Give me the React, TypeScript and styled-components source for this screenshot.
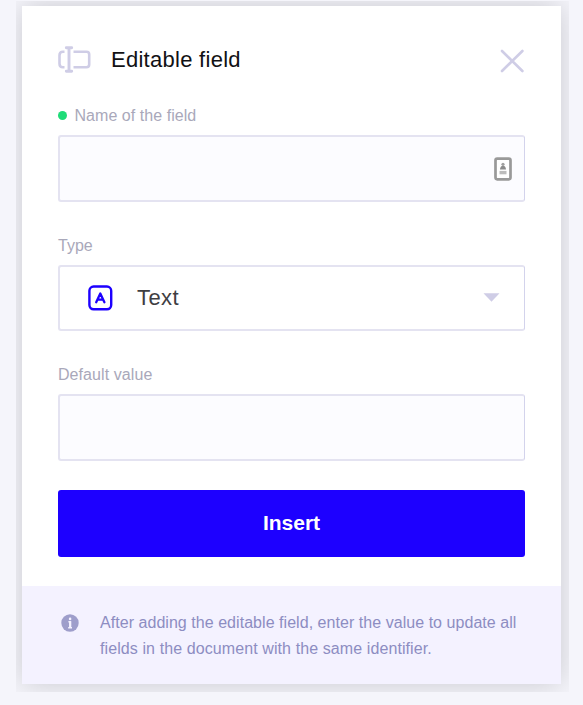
import React from "react";
import styled, { createGlobalStyle } from "styled-components";

const GlobalStyle = createGlobalStyle`
  *, *::before, *::after { box-sizing: border-box; }
  body {
    margin: 0;
    background: #f5f5fb;
    font-family: "Liberation Sans", Arial, sans-serif;
    overflow: hidden;
  }
  button, input { font-family: inherit; }
`;

const Stage = styled.main`
  width: 583px;
  height: 705px;
  padding: 1px 14px 13px 16px;
`;

const Frame = styled.div`
  height: 691px;
  padding: 4.5px 7.6px 8px 6.3px;
  overflow: hidden;
`;

const Dialog = styled.section`
  height: 678.5px;
  display: flex;
  flex-direction: column;
  background: #fff;
  box-shadow: 0 0 28px rgba(0, 0, 0, 0.18);
`;

const Content = styled.div`
  flex: 1;
  padding: 38.5px 36.4px 0 35.7px;
`;

const Header = styled.header`
  display: flex;
  align-items: center;
  height: 32px;
`;

const Title = styled.h1`
  flex: 1;
  margin: 0 0 0 19px;
  font-size: 22px;
  line-height: 32px;
  font-weight: 400;
  letter-spacing: 0.28px;
  color: #111114;
`;

const CloseButton = styled.button`
  display: flex;
  padding: 0;
  border: 0;
  background: none;
  margin-top: 2px;
`;

const Label = styled.label<{ $top: number; $spacing?: number }>`
  display: flex;
  align-items: center;
  height: 20px;
  margin-top: ${(p) => p.$top}px;
  font-size: 16px;
  letter-spacing: ${(p) => p.$spacing ?? 0}px;
  color: #a9a8ba;
`;

const RequiredDot = styled.span`
  width: 9px;
  height: 9px;
  margin-right: 7.5px;
  border-radius: 50%;
  background: #1fdc78;
`;

const FieldBox = styled.div<{ $white?: boolean; $height: number }>`
  display: flex;
  align-items: center;
  height: ${(p) => p.$height}px;
  margin-top: 9px;
  border: 2px solid #e4e3f1;
  border-right: 1px solid #d3d3ec;
  border-radius: 3px;
  background: ${(p) => (p.$white ? "#fff" : "#fcfcff")};
`;

const Input = styled.input`
  flex: 1;
  min-width: 0;
  height: 100%;
  padding: 0 12px;
  border: 0;
  outline: 0;
  background: none;
  font-size: 22px;
`;

const ContactIcon = styled.svg`
  margin: 1px 12px 0 0;
`;

const TypeIcon = styled.svg`
  margin-left: 28px;
`;

const Value = styled.span`
  flex: 1;
  margin-left: 24px;
  font-size: 22px;
  letter-spacing: 0.4px;
  color: #3e3e42;
`;

const Caret = styled.svg`
  margin: 0 24px 1px 0;
`;

const InsertButton = styled.button`
  display: block;
  width: 100%;
  height: 67px;
  margin-top: 29px;
  padding: 0;
  border: 0;
  border-radius: 3px;
  background: #1d00ff;
  color: #fff;
  font-size: 21px;
  font-weight: 700;
`;

const Footer = styled.footer`
  display: flex;
  height: 98px;
  padding: 24px 0 0 38.5px;
  background: #f4f2ff;
`;

const InfoIcon = styled.svg`
  margin-top: 4px;
`;

const Note = styled.p`
  margin: 0 0 0 21.2px;
  font-size: 16px;
  line-height: 26px;
  color: #8d8dc2;
`;

const NoteLine = styled.span<{ $spacing: number }>`
  display: block;
  white-space: nowrap;
  letter-spacing: ${(p) => p.$spacing}px;
`;

export default function App() {
  return (
    <>
      <GlobalStyle />
      <Stage>
        <Frame>
          <Dialog aria-labelledby="dialog-title">
            <Content>
              <Header>
                <svg width="34" height="28" viewBox="0 0 34 28" fill="none" stroke="#cfcde6" strokeWidth="2.6">
                  <path d="M6.5 5.8H4.8Q1.5 5.8 1.5 9.3V17.7Q1.5 21.2 4.8 21.2H6.5M15.5 5.8H28.5Q31.2 5.8 31.2 8.5V18.5Q31.2 21.2 28.5 21.2H15.5" />
                  <path d="M8.3 1.8H13.7M11 1.8V25.3M8.3 25.3H13.7" strokeWidth="2.9" strokeLinecap="round" />
                </svg>
                <Title id="dialog-title">Editable field</Title>
                <CloseButton aria-label="Close">
                  <svg width="25" height="24" viewBox="0 0 25 24" stroke="#cfcde6" strokeWidth="2.6" strokeLinecap="round">
                    <path d="M2 2L22.4 22M22.4 2L2 22" />
                  </svg>
                </CloseButton>
              </Header>

              <Label $top={29.5} $spacing={0.05} htmlFor="name">
                <RequiredDot />
                Name of the field
              </Label>
              <FieldBox $height={67}>
                <Input id="name" />
                <ContactIcon width="18" height="24" viewBox="0 0 18 24">
                  <rect x="1.5" y="1.7" width="15" height="20.6" rx="1.7" fill="#fff" stroke="#999" strokeWidth="2.7" />
                  <circle cx="9" cy="7.3" r="1.6" fill="#a0a0a0" />
                  <path d="M6 12.5Q6.2 8.7 9 8.7T12 12.5Z" fill="#8b8b8b" />
                  <path d="M5.5 15.6H12.5" stroke="#bcbcbc" strokeWidth="3.4" />
                </ContactIcon>
              </FieldBox>

              <Label $top={34}>Type</Label>
              <FieldBox $white $height={66}>
                <TypeIcon width="25" height="26" viewBox="0 0 25 26" fill="none" stroke="#1d00ff">
                  <rect x="1.4" y="1.5" width="21.8" height="22.8" rx="4.2" strokeWidth="2.4" />
                  <path d="M8.2 17.2L12.3 8.5L16.4 17.2M9.6 14.6H15" strokeWidth="2.3" strokeLinecap="round" strokeLinejoin="round" />
                </TypeIcon>
                <Value>Text</Value>
                <Caret width="17" height="9" viewBox="0 0 17 9">
                  <path d="M0.5 0.3H16.5L8.5 8.7Z" fill="#cfcde6" />
                </Caret>
              </FieldBox>

              <Label $top={34} $spacing={0.08} htmlFor="default">Default value</Label>
              <FieldBox $height={67}>
                <Input id="default" />
              </FieldBox>

              <InsertButton>Insert</InsertButton>
            </Content>

            <Footer>
              <InfoIcon width="18" height="18" viewBox="0 0 18 18">
                <circle cx="9" cy="9" r="8.7" fill="#9e9ecb" />
                <path d="M7.4 7.8H9.2V13.6M7.2 13.8H11" fill="none" stroke="#f4f2ff" strokeWidth="1.4" />
                <path d="M9.2 7.2V14" stroke="#f4f2ff" strokeWidth="2.2" />
                <circle cx="9.1" cy="4.9" r="1.3" fill="#f4f2ff" />
              </InfoIcon>
              <Note>
                <NoteLine $spacing={0.045}>After adding the editable field, enter the value to update all</NoteLine>
                <NoteLine $spacing={0.095}>fields in the document with the same identifier.</NoteLine>
              </Note>
            </Footer>
          </Dialog>
        </Frame>
      </Stage>
    </>
  );
}
